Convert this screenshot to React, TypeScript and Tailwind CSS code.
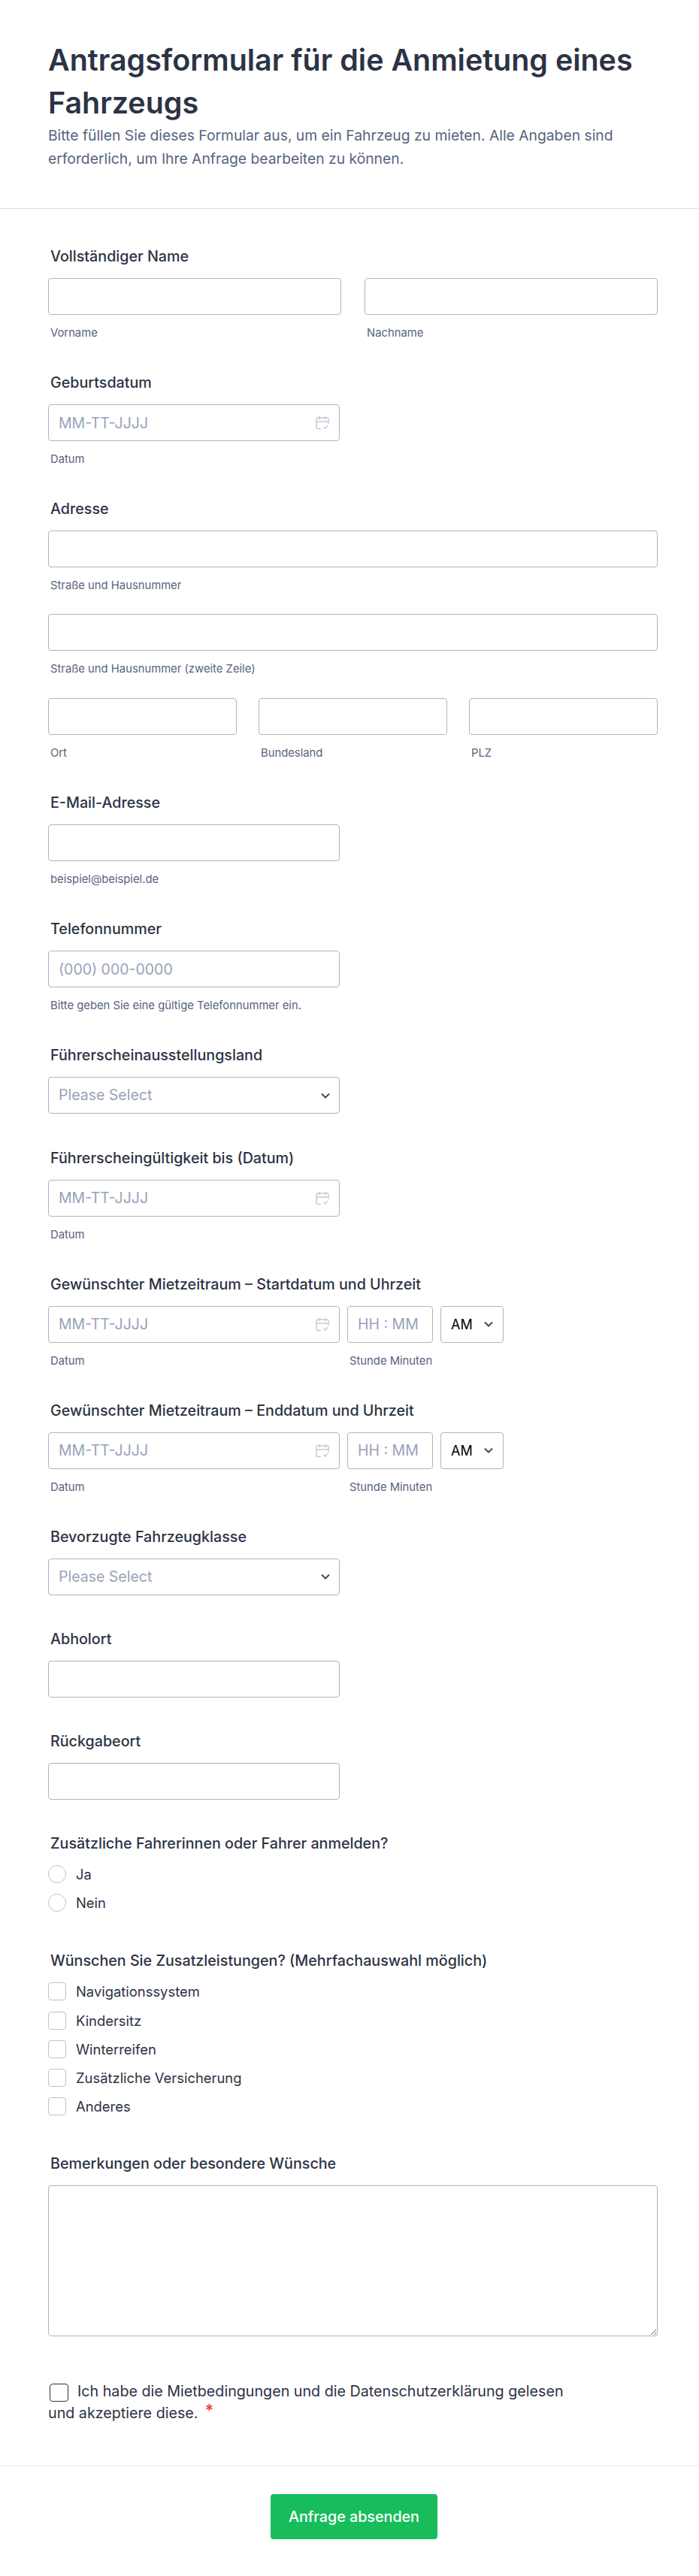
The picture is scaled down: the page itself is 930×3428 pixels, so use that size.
import React from "react";

const inputCls =
  "block h-[49px] w-full rounded-[4px] border border-[#aeb4c6] bg-white px-[13px] text-[19.5px] text-[#2c3345] outline-none placeholder:text-[#97a3b9]";

function Label({ children }: { children: React.ReactNode }) {
  return <div className="mb-[17px] h-[26px] pt-[2px] pl-[3px] text-[19.7px] leading-[24px] font-medium whitespace-nowrap text-[#2c3345]">{children}</div>;
}

function Sub({ children }: { children: React.ReactNode }) {
  return <div className="mt-[16px] h-[16px] pl-[3px] text-[14.8px] leading-[16px] whitespace-nowrap text-[#57647e]">{children}</div>;
}

function Field({ label, children }: { label: string; children: React.ReactNode }) {
  return (
    <div className="mb-[44.1px]">
      <Label>{label}</Label>
      {children}
    </div>
  );
}

function CalendarIcon() {
  return (
    <svg width="18" height="19" viewBox="0 0 18 19" fill="none" stroke="#c3cad8" strokeWidth="1.5" className="absolute top-[15px] right-[14px]">
      <path d="M7 17.5H3a2 2 0 0 1-2-2V5a2 2 0 0 1 2-2h12a2 2 0 0 1 2 2v6" />
      <path d="M1 8h16" />
      <path d="M5 1v4M13 1v4" />
      <path d="M10.5 15l2 2 4-4" />
    </svg>
  );
}

function Chevron() {
  return (
    <svg width="12" height="8" viewBox="0 0 12 8" fill="none" stroke="#3e4a63" strokeWidth="2">
      <path d="M1 1.5l5 5 5-5" />
    </svg>
  );
}

function DateInput() {
  return (
    <div className="relative w-[388px]">
      <input className={inputCls} placeholder="MM-TT-JJJJ" />
      <CalendarIcon />
    </div>
  );
}

function SelectBox() {
  return (
    <div className="flex h-[49px] w-[388px] items-center justify-between rounded-[4px] border border-[#aeb4c6] bg-white pr-[12px] pl-[13px] text-[19.5px] text-[#97a3b9]">
      <span>Please Select</span>
      <Chevron />
    </div>
  );
}

function DateTime() {
  return (
    <div className="flex">
      <div className="w-[388px]">
        <DateInput />
        <Sub>Datum</Sub>
      </div>
      <div className="ml-[10px] w-[114px]">
        <input className={inputCls} placeholder="HH : MM" />
        <Sub>Stunde Minuten</Sub>
      </div>
      <div className="ml-[10px] flex h-[49px] w-[84px] items-center justify-between rounded-[4px] border border-[#aeb4c6] bg-white pr-[13px] pl-[13px] text-[18px] text-black">
        <span>AM</span>
        <Chevron />
      </div>
    </div>
  );
}

function Option({ label, round }: { label: string; round?: boolean }) {
  return (
    <div className="flex h-[24px] items-center">
      <span className={`h-[24px] w-[24px] shrink-0 border border-[#bcc2ce] bg-white ${round ? "rounded-full" : "rounded-[4px]"}`} />
      <span className="ml-[13px] text-[18.4px] leading-[24px] text-[#2c3345]">{label}</span>
    </div>
  );
}

export default function App() {
  return (
    <div className="min-h-[3428px] w-full bg-white font-[Inter,sans-serif]">
      <header className="border-b border-[#dadee8] px-[64px] pt-[52px] pb-[50px]">
        <h1 className="text-[39.4px] leading-[57px] font-semibold text-[#2c3345]">Antragsformular für die Anmietung eines Fahrzeugs</h1>
        <p className="-mt-[1px] text-[19.3px] leading-[31px] text-[#57647e]">
          Bitte füllen Sie dieses Formular aus, um ein Fahrzeug zu mieten. Alle Angaben sind erforderlich, um Ihre Anfrage bearbeiten zu können.
        </p>
      </header>

      <main className="px-[64px] pt-[49px] pr-[55px]">
        <Field label="Vollständiger Name">
          <div className="grid grid-cols-2 gap-x-[31px]">
            <div>
              <input className={inputCls} />
              <Sub>Vorname</Sub>
            </div>
            <div>
              <input className={inputCls} />
              <Sub>Nachname</Sub>
            </div>
          </div>
        </Field>

        <Field label="Geburtsdatum">
          <DateInput />
          <Sub>Datum</Sub>
        </Field>

        <Field label="Adresse">
          <input className={inputCls} />
          <Sub>Straße und Hausnummer</Sub>
          <input className={`${inputCls} mt-[30px]`} />
          <Sub>Straße und Hausnummer (zweite Zeile)</Sub>
          <div className="mt-[31px] grid grid-cols-3 gap-x-[29px]">
            <div>
              <input className={inputCls} />
              <Sub>Ort</Sub>
            </div>
            <div>
              <input className={inputCls} />
              <Sub>Bundesland</Sub>
            </div>
            <div>
              <input className={inputCls} />
              <Sub>PLZ</Sub>
            </div>
          </div>
        </Field>

        <Field label="E-Mail-Adresse">
          <input className={`${inputCls} !w-[388px]`} />
          <Sub>beispiel@beispiel.de</Sub>
        </Field>

        <Field label="Telefonnummer">
          <input className={`${inputCls} !w-[388px]`} placeholder="(000) 000-0000" />
          <Sub>Bitte geben Sie eine gültige Telefonnummer ein.</Sub>
        </Field>

        <Field label="Führerscheinausstellungsland">
          <SelectBox />
        </Field>

        <Field label="Führerscheingültigkeit bis (Datum)">
          <DateInput />
          <Sub>Datum</Sub>
        </Field>

        <Field label="Gewünschter Mietzeitraum – Startdatum und Uhrzeit">
          <DateTime />
        </Field>

        <Field label="Gewünschter Mietzeitraum – Enddatum und Uhrzeit">
          <DateTime />
        </Field>

        <Field label="Bevorzugte Fahrzeugklasse">
          <SelectBox />
        </Field>

        <Field label="Abholort">
          <input className={`${inputCls} !w-[388px]`} />
        </Field>

        <Field label="Rückgabeort">
          <input className={`${inputCls} !w-[388px]`} />
        </Field>

        <div className="mb-[50.8px]">
          <Label>Zusätzliche Fahrerinnen oder Fahrer anmelden?</Label>
          <div className="flex flex-col gap-[14.3px]">
            <Option round label="Ja" />
            <Option round label="Nein" />
          </div>
        </div>

        <div className="mb-[50px]">
          <Label>Wünschen Sie Zusatzleistungen? (Mehrfachauswahl möglich)</Label>
          <div className="flex flex-col gap-[14.3px]">
            <Option label="Navigationssystem" />
            <Option label="Kindersitz" />
            <Option label="Winterreifen" />
            <Option label="Zusätzliche Versicherung" />
            <Option label="Anderes" />
          </div>
        </div>

        <div>
          <Label>Bemerkungen oder besondere Wünsche</Label>
          <textarea className="block h-[201px] w-full rounded-[4px] border border-[#aeb4c6] bg-white outline-none" />
        </div>

        <p className="mt-[59px] text-[19.7px] leading-[28px] text-[#2c3345]">
          <span className="mr-[12px] ml-[2px] inline-block h-[24px] w-[25px] rounded-[4px] border border-[#2c3345] bg-white align-middle" />
          Ich habe die Mietbedingungen und die Datenschutzerklärung gelesen
          <br />
          und akzeptiere diese.
          <span className="relative -top-[3px] ml-[9px] text-[22px] font-semibold text-[#f23a3c]">*</span>
        </p>
      </main>

      <footer className="mt-[56px] flex justify-center border-t border-[#e6e9f0] pt-[37px] pb-[48px] pl-[12px]">
        <button className="h-[60px] w-[222px] rounded-[4px] bg-[#18bd5b] text-[19.7px] font-medium text-white">Anfrage absenden</button>
      </footer>
    </div>
  );
}
